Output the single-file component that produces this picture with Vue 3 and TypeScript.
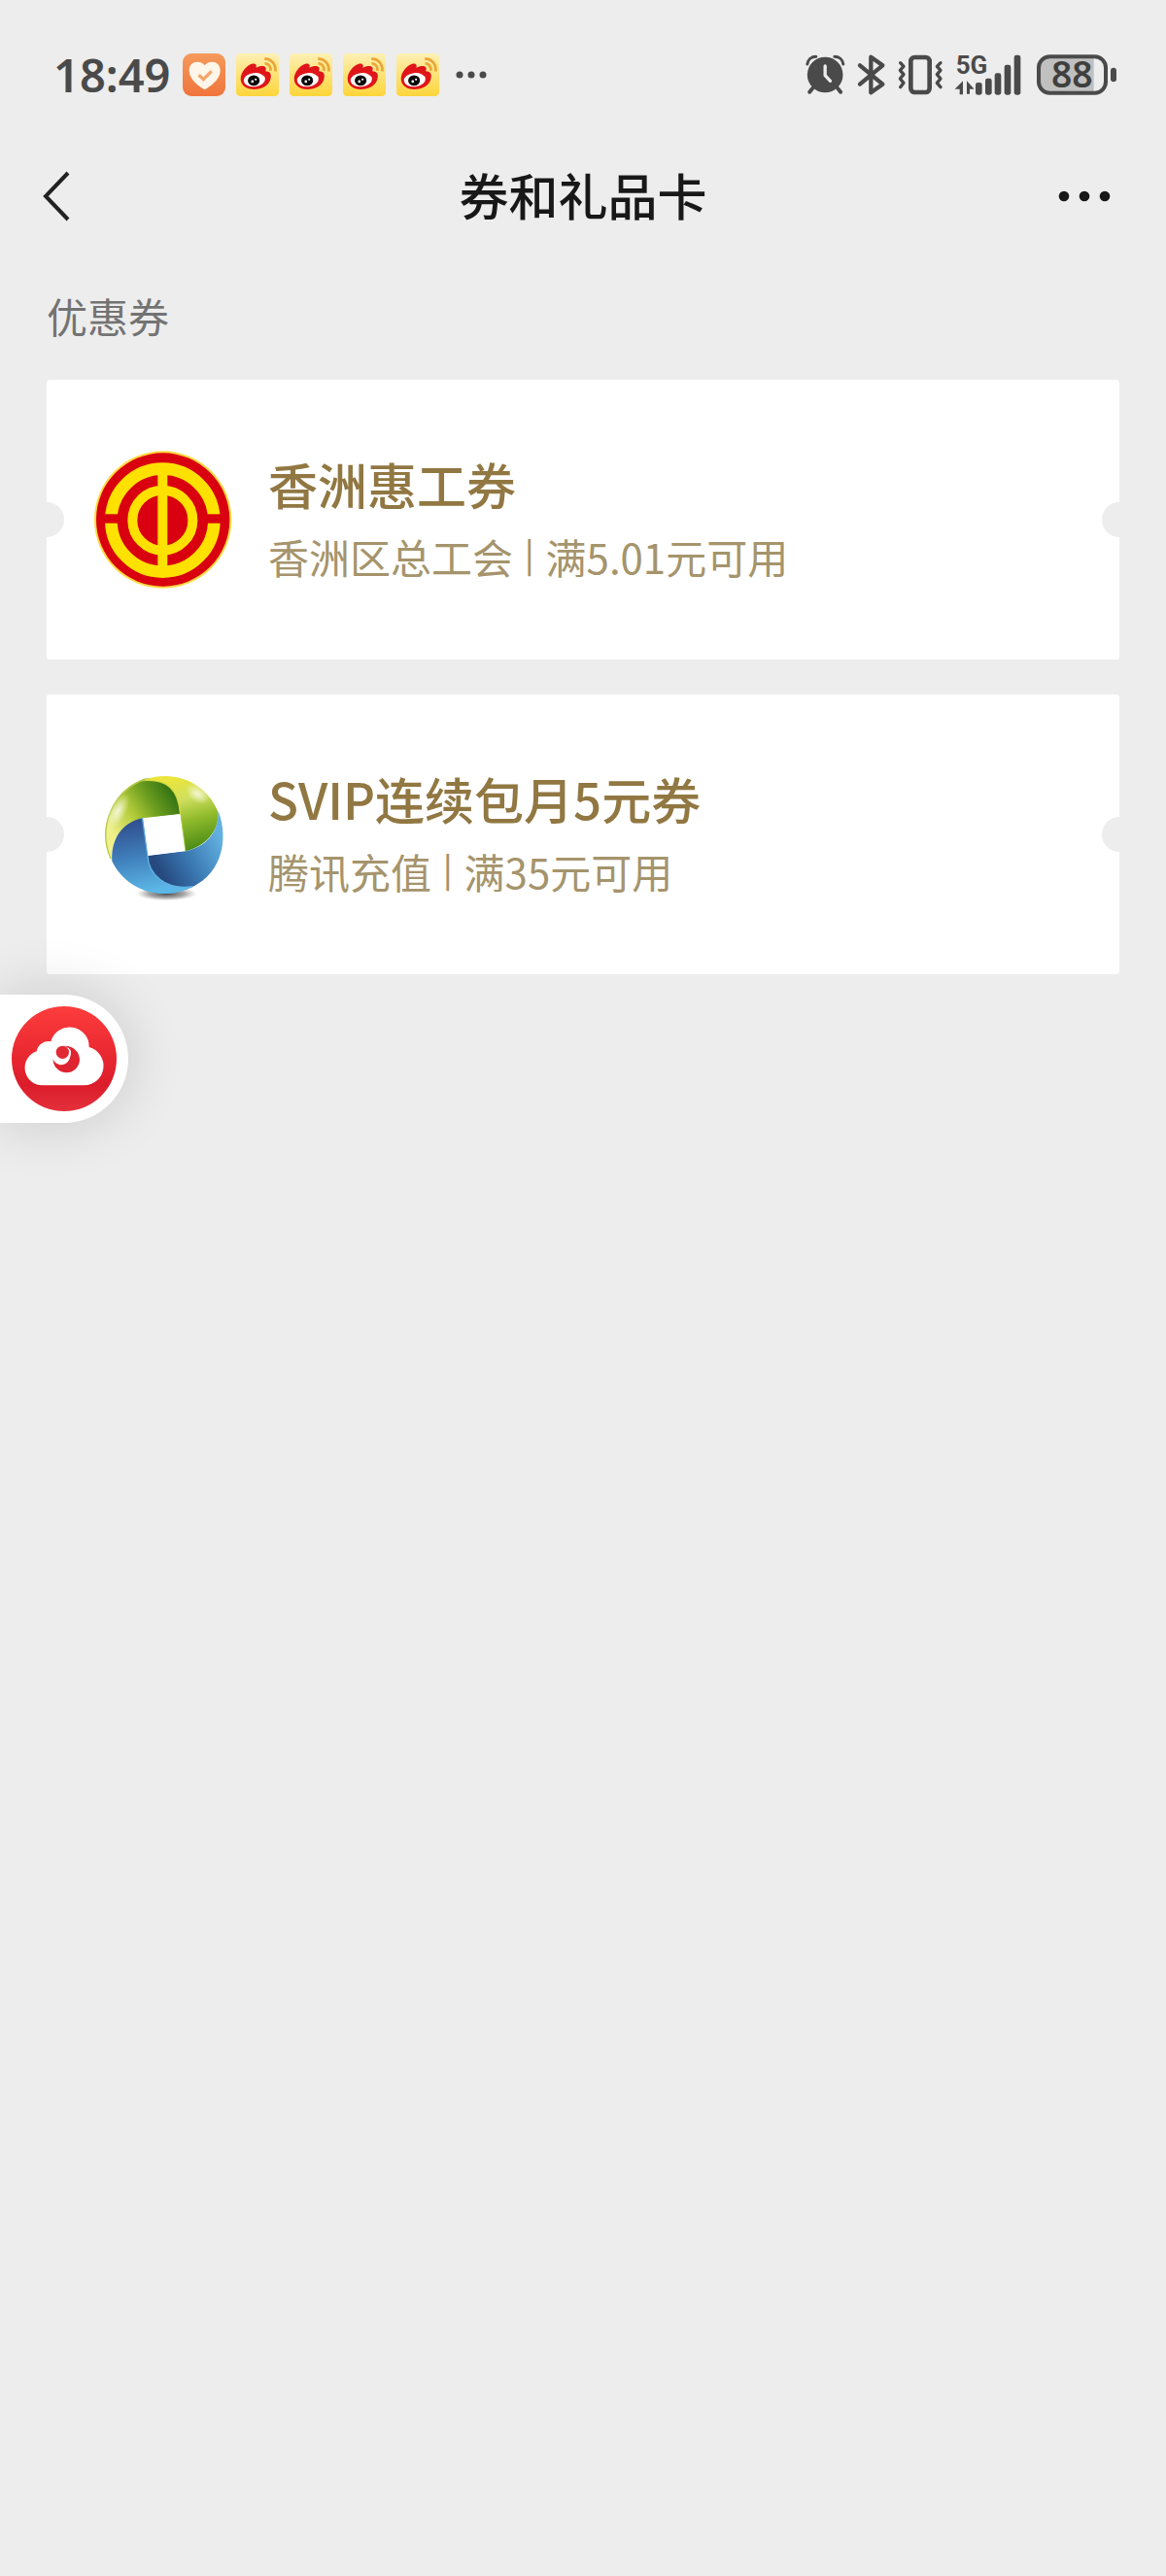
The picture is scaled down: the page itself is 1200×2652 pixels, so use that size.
<script setup lang="ts">
interface Coupon {
  id: string
  logo: 'union' | 'recharge'
  title: string
  issuer: string
  condition: string
}

interface Bar {
  x: number
  y: number
}

const coupons: Coupon[] = [
  { id: 'c1', logo: 'union', title: '香洲惠工券', issuer: '香洲区总工会', condition: '满5.01元可用' },
  { id: 'c2', logo: 'recharge', title: 'SVIP连续包月5元券', issuer: '腾讯充值', condition: '满35元可用' },
]

const weiboCount = 4

const signalBars: Bar[] = [
  { x: 103, y: 133 },
  { x: 133, y: 120 },
  { x: 162, y: 104 },
  { x: 192, y: 78 },
  { x: 222, y: 48 },
]
</script>

<template>
  <div class="page">
    <div class="status">
      <div class="status-left">
        <time class="clock">18:49</time>
        <div class="notices">
          <svg class="app-icon" viewBox="444 45 132 132" aria-hidden="true">
            <defs>
              <linearGradient id="health" x1="0" y1="0" x2="0" y2="1">
                <stop offset="0" stop-color="#f59a5c" />
                <stop offset="1" stop-color="#f0743c" />
              </linearGradient>
            </defs>
            <rect x="444" y="45" width="132" height="132" rx="27" fill="url(#health)" />
            <path d="M512 157C496 148 464 125 464 98C464 80 476 71 489 71C500 71 508 76 512 82C516 76 524 71 535 71C548 71 560 80 560 98C560 125 528 148 512 157Z" fill="#fff6ea" />
            <path d="M494 112L508 125L533 100" fill="none" stroke="#f3a66c" stroke-width="10" />
          </svg>
          <svg v-for="n in weiboCount" :key="n" class="app-icon" viewBox="610 46 131 131" aria-hidden="true">
            <defs>
              <linearGradient :id="`weibo${n}`" x1="0" y1="0" x2="0" y2="1">
                <stop offset="0" stop-color="#fdf0b4" />
                <stop offset="1" stop-color="#fdd53a" />
              </linearGradient>
            </defs>
            <rect x="610" y="46" width="131" height="131" rx="13" :fill="`url(#weibo${n})`" />
            <path d="M624 122C625 105 640 83 658 78C669 75 674 80 671 90C682 84 698 82 701 91C702 95 700 98 700 100C712 101 719 106 716 121C713 143 690 156 664 156C641 156 623 143 624 122Z" fill="#e0151a" />
            <ellipse cx="666" cy="127" rx="33" ry="21" fill="#fff" transform="rotate(-6 666 127)" />
            <ellipse cx="664" cy="129" rx="18" ry="16" fill="#0b0b0b" />
            <circle cx="660" cy="132" r="4" fill="#fff" />
            <circle cx="670" cy="126" r="3" fill="#fff" />
            <path d="M697 63C717 61 733 79 730 101M698 77C709 76 718 87 715 99" fill="none" stroke="#eba536" stroke-width="8" />
          </svg>
        </div>
        <svg class="more-notices" viewBox="0 0 32 8" aria-hidden="true">
          <circle cx="4" cy="4" r="3.5" />
          <circle cx="16" cy="4" r="3.5" />
          <circle cx="28" cy="4" r="3.5" />
        </svg>
      </div>

      <div class="status-right">
        <svg class="alarm" viewBox="59 46 122 126" aria-hidden="true">
          <circle cx="119" cy="109" r="55" fill="#4a4a4a" />
          <path d="M64 76C66 62 77 53 91 53M148 53C162 53 173 62 175 76" fill="none" stroke="#4a4a4a" stroke-width="9" stroke-linecap="round" />
          <path d="M80 151L71 162M158 151L167 162" fill="none" stroke="#4a4a4a" stroke-width="12" stroke-linecap="round" />
          <path d="M119 82V111L135 128" fill="none" stroke="#ededed" stroke-width="10" stroke-linecap="round" stroke-linejoin="round" />
        </svg>
        <svg class="bluetooth" viewBox="219 46 84 126" aria-hidden="true">
          <path d="M225 80L295 138L259 164V54L295 80L225 138" fill="none" stroke="#4a4a4a" stroke-width="13" stroke-linecap="round" stroke-linejoin="round" />
        </svg>
        <svg class="vibrate" viewBox="343 46 138 126" aria-hidden="true">
          <rect x="383" y="55" width="58" height="108" rx="12" fill="none" stroke="#4a4a4a" stroke-width="14" />
          <path d="M351 72L361 83L350 95L361 108L350 121L361 134L351 147M475 72L464 83L475 95L464 108L475 121L464 134L475 147" fill="none" stroke="#4a4a4a" stroke-width="10" stroke-linecap="round" stroke-linejoin="round" />
        </svg>
        <svg class="signal" viewBox="40 46 204 126" role="img" aria-label="5G">
          <text class="network" x="42" y="107">5G</text>
          <path d="M64 128V170H54V153H39ZM76 128L99 153H85V168H76Z" fill="#4a4a4a" />
          <rect v-for="b in signalBars" :key="b.x" :x="b.x" :y="b.y" width="20" :height="171 - b.y" rx="7" fill="#4a4a4a" />
        </svg>
        <svg class="battery" viewBox="291 46 246 126" role="img" aria-label="88%">
          <path d="M467 54H331Q297 54 297 88V131Q297 165 331 165H467Z" fill="#c0c0c0" />
          <rect x="297" y="53" width="207" height="112" rx="34" fill="none" stroke="#4a4a4a" stroke-width="12" />
          <rect x="519" y="87" width="18" height="44" rx="9" fill="#4a4a4a" />
          <text class="level" x="400" y="149" text-anchor="middle">88</text>
        </svg>
      </div>
    </div>

    <header class="nav">
      <button class="nav-button" type="button" aria-label="返回">
        <svg class="back" viewBox="0 0 28 52" aria-hidden="true">
          <path d="M26 2L3 26L26 50" fill="none" stroke="#222" stroke-width="4" />
        </svg>
      </button>
      <h1 class="nav-title">券和礼品卡</h1>
      <button class="nav-button end" type="button" aria-label="更多">
        <svg class="more" viewBox="0 0 54 12" aria-hidden="true">
          <circle cx="6" cy="6" r="5.3" />
          <circle cx="27" cy="6" r="5.3" />
          <circle cx="48" cy="6" r="5.3" />
        </svg>
      </button>
    </header>

    <main class="content">
      <h2 class="section">优惠券</h2>
      <ul class="coupons">
        <li v-for="c in coupons" :key="c.id" class="coupon">
          <svg v-if="c.logo === 'union'" class="logo" viewBox="168 69 432 432" aria-hidden="true">
            <circle cx="383" cy="285" r="212" fill="#ffd940" />
            <circle cx="383" cy="285" r="206" fill="#d9000f" />
            <circle cx="382" cy="287" r="159" fill="none" stroke="#ffe100" stroke-width="38" />
            <rect x="190" y="268" width="384" height="28" fill="#d9000f" />
            <circle cx="382" cy="287" r="93" fill="none" stroke="#ffe100" stroke-width="30" />
            <rect x="367" y="112" width="30" height="350" fill="#ffe100" />
          </svg>
          <svg v-else class="logo" viewBox="168 81 432 432" aria-hidden="true">
            <defs>
              <radialGradient id="ground">
                <stop offset="0" stop-color="#333" stop-opacity="0.9" />
                <stop offset="0.6" stop-color="#555" stop-opacity="0.5" />
                <stop offset="1" stop-color="#888" stop-opacity="0" />
              </radialGradient>
              <linearGradient id="bladeA" gradientUnits="userSpaceOnUse" x1="425" y1="165" x2="225" y2="290">
                <stop offset="0" stop-color="#2c6d12" />
                <stop offset="0.35" stop-color="#6a9c1e" />
                <stop offset="0.65" stop-color="#b4cc3a" />
                <stop offset="1" stop-color="#eff08a" />
              </linearGradient>
              <linearGradient id="bladeB" gradientUnits="userSpaceOnUse" x1="440" y1="120" x2="500" y2="340">
                <stop offset="0" stop-color="#e9e53c" />
                <stop offset="0.3" stop-color="#cfdf5e" />
                <stop offset="0.6" stop-color="#8fba2a" />
                <stop offset="1" stop-color="#4a8a16" />
              </linearGradient>
              <linearGradient id="bladeC" gradientUnits="userSpaceOnUse" x1="375" y1="410" x2="560" y2="310">
                <stop offset="0" stop-color="#264a80" />
                <stop offset="0.45" stop-color="#3a78b2" />
                <stop offset="1" stop-color="#62b0e0" />
              </linearGradient>
              <linearGradient id="bladeD" gradientUnits="userSpaceOnUse" x1="280" y1="260" x2="320" y2="475">
                <stop offset="0" stop-color="#31508e" />
                <stop offset="0.5" stop-color="#3f80bc" />
                <stop offset="1" stop-color="#5cb6e6" />
              </linearGradient>
              <radialGradient id="shine">
                <stop offset="0" stop-color="#fff" stop-opacity="0.75" />
                <stop offset="1" stop-color="#fff" stop-opacity="0" />
              </radialGradient>
            </defs>
            <ellipse cx="394" cy="480" rx="94" ry="22" fill="url(#ground)" />
            <path d="M437 234L320 247C262 260 226 306 224 378A183 183 0 0 1 318 128C380 110 430 140 437 234Z" fill="url(#bladeA)" />
            <path d="M318 131C420 92 520 140 554 230C556 290 510 336 452 349L437 234C430 160 400 124 318 131Z" fill="url(#bladeB)" />
            <path d="M554 224C590 320 560 430 455 467C380 470 334 430 336 363L452 349C516 336 556 290 554 224Z" fill="url(#bladeC)" />
            <path d="M320 247L336 363C338 420 390 470 475 458C380 508 270 470 226 380C222 310 260 258 320 247Z" fill="url(#bladeD)" />
            <path d="M437 234C430 160 400 124 318 131" fill="none" stroke="#d6d840" stroke-width="4" />
            <path d="M336 363C338 420 390 470 475 458" fill="none" stroke="#63b4e6" stroke-width="4" />
            <path d="M320 247L336 363" stroke="#5aa4dc" stroke-width="5" />
            <path d="M437 234L452 349" stroke="#b4d24a" stroke-width="4" />
            <path d="M222 372A183 183 0 0 1 330 126" fill="none" stroke="#b5c84a" stroke-width="4" />
            <ellipse cx="490" cy="172" rx="42" ry="26" fill="url(#shine)" transform="rotate(35 490 172)" />
            <ellipse cx="244" cy="225" rx="26" ry="60" fill="url(#shine)" transform="rotate(28 244 225)" />
            <path d="M322 248L436 235L451 348L337 362Z" fill="#fff" />
          </svg>
          <div class="info">
            <h3 class="title">{{ c.title }}</h3>
            <p class="detail">
              <span>{{ c.issuer }}</span><span class="divider">|</span><span>{{ c.condition }}</span>
            </p>
          </div>
        </li>
      </ul>
    </main>

    <button class="floating" type="button" aria-label="云闪付">
      <svg class="floating-icon" viewBox="36 167 324 324" aria-hidden="true">
        <defs>
          <linearGradient id="cloudBg" x1="0" y1="0" x2="0" y2="1">
            <stop offset="0" stop-color="#fd3c3c" />
            <stop offset="0.75" stop-color="#dc1c2a" />
            <stop offset="1" stop-color="#e4303c" />
          </linearGradient>
        </defs>
        <circle cx="198" cy="329" r="162" fill="url(#cloudBg)" />
        <path d="M130 411A54 54 0 0 1 113 306A37 37 0 0 1 157 276A60 60 0 0 1 275 293A60 60 0 0 1 260 411Z" fill="#fff" />
        <circle cx="193" cy="309" r="20" fill="#e02a34" />
        <path d="M164 329C172 356 218 358 219 308C219 300 210 292 197 289C228 288 246 309 246 333A41 41 0 0 1 164 329Z" fill="#dd2430" />
      </svg>
    </button>
  </div>
</template>

<style>
body {
  margin: 0;
  background: #ededed;
}
</style>

<style scoped>
.page {
  min-height: 100vh;
  background: #ededed;
  font-family: "Noto Sans CJK SC", sans-serif;
  color: #181818;
}

.status {
  display: flex;
  align-items: center;
  justify-content: space-between;
  height: 153px;
  padding: 0 51px 0 55px;
}

.status-left,
.status-right,
.notices {
  display: flex;
  align-items: center;
}

.clock {
  font-family: "Noto Sans", sans-serif;
  font-size: 47px;
  line-height: 60px;
  font-weight: 600;
  color: #4a4a4a;
}

.notices {
  gap: 11px;
  margin: 0 17px 0 12px;
}

.app-icon {
  width: 44px;
  height: 44px;
}

.more-notices {
  width: 32px;
  height: 8px;
  fill: #4a4a4a;
}

.status-right {
  gap: 13px;
}

.status-right svg {
  height: 42px;
  overflow: visible;
}

.alarm {
  width: 41px;
}

.bluetooth {
  width: 28px;
}

.vibrate {
  width: 46px;
}

.signal {
  width: 68px;
}

.battery {
  width: 82px;
  margin-left: 3px;
}

.network {
  font-family: "Liberation Sans Narrow", Roboto, sans-serif;
  font-size: 78px;
  font-weight: 700;
  fill: #4a4a4a;
}

.level {
  font-family: "Noto Sans", sans-serif;
  font-size: 112px;
  font-weight: 600;
  fill: #3f3f3f;
}

.nav {
  display: flex;
  align-items: center;
  height: 98px;
  padding: 0 44px;
}

.nav-button {
  display: flex;
  align-items: center;
  flex: 1;
  height: 96px;
  padding: 0;
  border: 0;
  background: none;
}

.nav-button.end {
  justify-content: flex-end;
}

.back {
  width: 28px;
  height: 52px;
}

.more {
  width: 54px;
  height: 12px;
  margin-right: 13px;
  fill: #181818;
}

.nav-title {
  margin: 0;
  padding-bottom: 4px;
  font-size: 51px;
  line-height: 60px;
  font-weight: 500;
}

.content {
  padding: 44px 48px 0;
}

.section {
  margin: 0 0 36px;
  font-size: 42px;
  line-height: 60px;
  font-weight: 400;
  color: #737373;
}

.coupons {
  display: flex;
  flex-direction: column;
  gap: 36px;
  margin: 0;
  padding: 0;
  list-style: none;
}

.coupon {
  position: relative;
  display: flex;
  align-items: center;
  gap: 36px;
  padding: 72px 48px;
  border-radius: 3px;
  background: #fff;
}

.coupon::before,
.coupon::after {
  content: "";
  position: absolute;
  top: 50%;
  width: 18px;
  height: 36px;
  margin-top: -18px;
  background: #ededed;
}

.coupon::before {
  left: 0;
  border-radius: 0 18px 18px 0;
}

.coupon::after {
  right: 0;
  border-radius: 18px 0 0 18px;
}

.logo {
  flex: none;
  width: 144px;
  height: 144px;
}

.info {
  display: flex;
  flex-direction: column;
  gap: 15px;
}

.title {
  margin: 0;
  font-size: 51px;
  line-height: 60px;
  font-weight: 500;
  color: #917742;
}

.detail {
  display: flex;
  align-items: flex-start;
  margin: 0;
  font-size: 42px;
  line-height: 60px;
  color: #a5946c;
}

.divider {
  margin: 0 12px;
  font-size: 34px;
  line-height: 54px;
  font-weight: 500;
}

.floating {
  position: relative;
  display: flex;
  padding: 12px;
  margin: 21px 0 0;
  border: 0;
  border-radius: 0 66px 66px 0;
  background: #fff;
  box-shadow: 0 0 60px rgba(0, 0, 0, 0.16);
}

.floating-icon {
  width: 108px;
  height: 108px;
}
</style>
